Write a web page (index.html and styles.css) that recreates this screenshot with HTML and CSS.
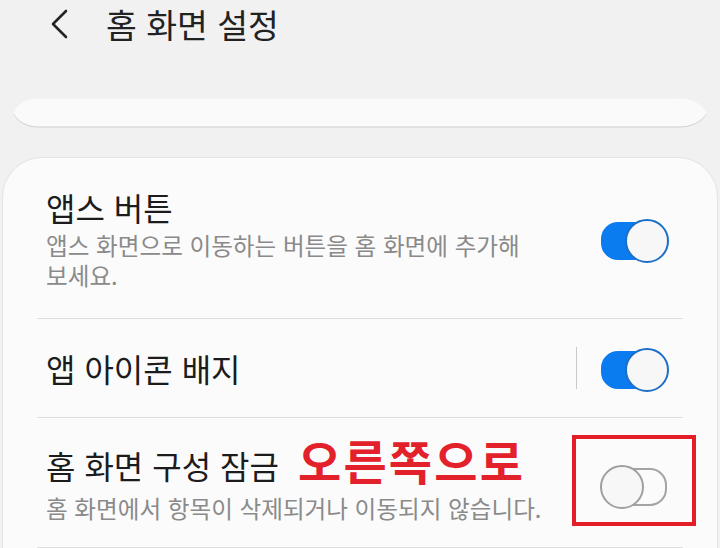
FILE: index.html
```html
<!DOCTYPE html>
<html lang="ko">
<head>
  <meta charset="UTF-8">
  <title>홈 화면 설정</title>
  <link rel="stylesheet" href="styles.css">
</head>
<body>

  <!-- HEADER -->
  <header class="header">
    <svg class="back" width="20" height="30" viewBox="0 0 20 30">
      <path d="M17 2 L4 15 L17 28" fill="none" stroke="#222" stroke-width="2.6" stroke-linecap="round" stroke-linejoin="round"/>
    </svg>
    <h1>홈 화면 설정</h1>
  </header>

  <!-- scrolled card, only its bottom shows -->
  <svg class="peek" width="694" height="30" viewBox="0 0 694 30">
    <path d="M26 0.5 H666 C680 0.5 690 7 693.5 14.7 C690 22 680 28.5 666 28.5 H26 C12 28.5 4 22 0.5 14.7 C4 7 12 0.5 26 0.5 Z" fill="#fafafa"/>
  </svg>

  <!-- SETTINGS CARD -->
  <div class="card">
    <div class="row">
      <div class="text">
        <div class="title">앱스 버튼</div>
        <div class="sub">앱스 화면으로 이동하는 버튼을 홈 화면에 추가해 보세요.</div>
      </div>
      <div class="control">
        <div class="switch on"></div>
      </div>
    </div>

    <div class="row">
      <div class="text">
        <div class="title">앱 아이콘 배지</div>
      </div>
      <div class="control">
        <div class="vline"></div>
        <div class="switch on"></div>
      </div>
    </div>

    <div class="row last">
      <div class="text">
        <div class="title">홈 화면 구성 잠금<span class="note">오른쪽으로</span></div>
        <div class="sub">홈 화면에서 항목이 삭제되거나 이동되지 않습니다.</div>
      </div>
      <div class="control">
        <div class="switch"></div>
      </div>
      <div class="mark"></div>
    </div>
  </div>

</body>
</html>
```

FILE: styles.css
```css
* {
  box-sizing: border-box;
}

body {
  margin: 0;
  width: 720px;
  height: 548px;
  overflow: hidden;
  background: #f1f1f1;
  font-family: "Noto Sans CJK KR", "Noto Sans", sans-serif;
  color: #1c1c1c;
}

/* HEADER */
.header {
  display: flex;
  align-items: center;
  height: 48px;
  padding-left: 49px;
}

.back {
  display: block;
}

.header h1 {
  margin: 0 0 0 37px;
  font-size: 33.5px;
  font-weight: 400;
  line-height: 48px;
  color: #222;
}

/* bottom of the card above */
.peek {
  display: block;
  margin: 50px 0 0 13px;
  filter: drop-shadow(0 1px 0.6px rgba(0, 0, 0, 0.14));
}

/* MAIN CARD */
.card {
  margin: 29px 2px 0 2px;
  height: 400px;
  padding-top: 2px;
  background: #fbfbfb;
  border: 1px solid #e4e4e4;
  border-bottom: none;
  border-radius: 40px 40px 0 0;
}

.row {
  position: relative;
  display: flex;
  align-items: center;
  margin: 0 34px;
  padding: 28px 15px 28px 9px;
  border-bottom: 1px solid #dedede;
}

.row.last {
  padding-bottom: 24px;
}

.text {
  flex: 1;
  margin-right: 40px;
  word-break: keep-all;
}

.title {
  font-size: 32px;
  line-height: 38px;
  color: #1c1c1c;
}

.sub {
  margin-top: 4px;
  font-size: 23.6px;
  line-height: 30px;
  color: #8a8a8a;
}

.row.last .sub {
  margin-top: 9px;
}

.note {
  margin-left: 19px;
  font-size: 47px;
  font-weight: 700;
  line-height: 0;
  letter-spacing: 2.2px;
  color: #e3212b;
  vertical-align: -1px;
}

.control {
  display: flex;
  align-items: center;
  gap: 23px;
}

.vline {
  width: 1px;
  height: 42px;
  background: #c9c9c9;
}

/* SWITCH */
.switch {
  position: relative;
  width: 68px;
  height: 40px;
}

.switch::before {
  content: "";
  position: absolute;
  top: 3px;
  left: 1px;
  right: 1px;
  height: 34px;
  border-radius: 17px;
  border: 2px solid #a4a4a4;
}

.switch::after {
  content: "";
  position: absolute;
  top: 0;
  left: 0;
  width: 40px;
  height: 40px;
  border-radius: 50%;
  background: #f7f7f7;
  border: 2px solid #9f9f9f;
}

.switch.on::before {
  background: #0b7bf0;
  border-color: #0b7bf0;
}

.switch.on::after {
  left: auto;
  right: -1px;
  border-color: #1c6fc6;
}

/* red annotation box */
.mark {
  position: absolute;
  left: 535px;
  top: 17px;
  width: 124px;
  height: 91px;
  border: 4px solid #e41e26;
}
```
